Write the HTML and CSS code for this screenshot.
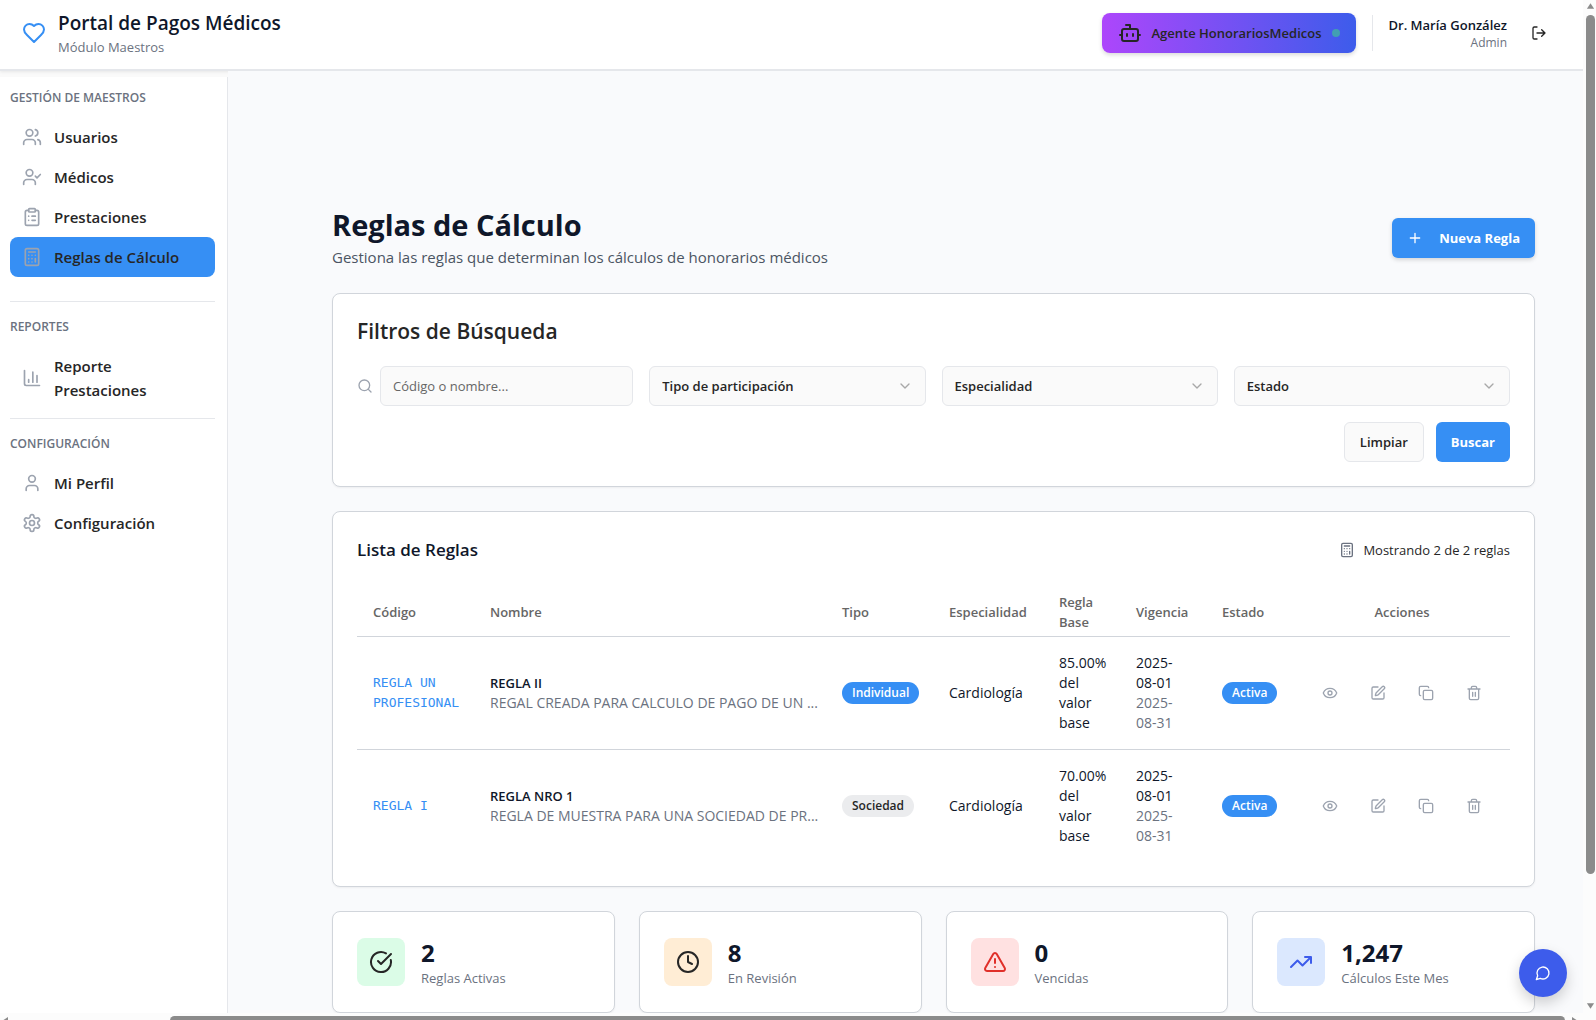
FILE: index.html
```html
<!DOCTYPE html>
<html lang="es">
<head>
<meta charset="utf-8">
<title>Portal de Pagos Médicos</title>
<meta name="viewport" content="width=device-width, initial-scale=1">
<link rel="stylesheet" href="styles.css">
</head>
<body>
<svg class="sprite" aria-hidden="true">
  <symbol id="i-heart" viewBox="0 0 24 24"><path d="M19 14c1.49-1.46 3-3.21 3-5.5A5.5 5.5 0 0 0 16.500 3c-1.760 0-3 .5-4.500 2-1.500-1.500-2.740-2-4.500-2A5.500 5.500 0 0 0 2 8.500c0 2.300 1.500 4.050 3 5.500l7 7Z"/></symbol>
  <symbol id="i-bot" viewBox="0 0 24 24"><path d="M12 8V4H8"/><rect width="16" height="12" x="4" y="8" rx="2"/><path d="M2 14h2M20 14h2M15 13v2M9 13v2"/></symbol>
  <symbol id="i-logout" viewBox="0 0 24 24"><path d="m16 17 5-5-5-5M21 12H9M9 21H5a2 2 0 0 1-2-2V5a2 2 0 0 1 2-2h4"/></symbol>
  <symbol id="i-users" viewBox="0 0 24 24"><path d="M16 21v-2a4 4 0 0 0-4-4H6a4 4 0 0 0-4 4v2"/><circle cx="9" cy="7" r="4"/><path d="M22 21v-2a4 4 0 0 0-3-3.870M16 3.130a4 4 0 0 1 0 7.750"/></symbol>
  <symbol id="i-user-check" viewBox="0 0 24 24"><path d="m16 11 2 2 4-4M16 21v-2a4 4 0 0 0-4-4H6a4 4 0 0 0-4 4v2"/><circle cx="9" cy="7" r="4"/></symbol>
  <symbol id="i-clipboard" viewBox="0 0 24 24"><rect width="8" height="4" x="8" y="2" rx="1"/><path d="M16 4h2a2 2 0 0 1 2 2v14a2 2 0 0 1-2 2H6a2 2 0 0 1-2-2V6a2 2 0 0 1 2-2h2M12 11h4M12 16h4M8 11h.010M8 16h.010"/></symbol>
  <symbol id="i-calculator" viewBox="0 0 24 24"><rect width="16" height="20" x="4" y="2" rx="2"/><path d="M8 6h8M16 14v4M16 10h.010M12 10h.010M8 10h.010M12 14h.010M8 14h.010M12 18h.010M8 18h.010"/></symbol>
  <symbol id="i-chart" viewBox="0 0 24 24"><path d="M3 3v16a2 2 0 0 0 2 2h16M18 17V9M13 17V5M8 17v-3"/></symbol>
  <symbol id="i-user" viewBox="0 0 24 24"><path d="M19 21v-2a4 4 0 0 0-4-4H9a4 4 0 0 0-4 4v2"/><circle cx="12" cy="7" r="4"/></symbol>
  <symbol id="i-settings" viewBox="0 0 24 24"><path d="M12.220 2h-.440a2 2 0 0 0-2 2v.180a2 2 0 0 1-1 1.730l-.430.250a2 2 0 0 1-2 0l-.150-.080a2 2 0 0 0-2.730.730l-.220.380a2 2 0 0 0 .730 2.730l.150.100a2 2 0 0 1 1 1.720v.510a2 2 0 0 1-1 1.740l-.150.090a2 2 0 0 0-.730 2.730l.220.380a2 2 0 0 0 2.730.730l.150-.080a2 2 0 0 1 2 0l.430.250a2 2 0 0 1 1 1.730V20a2 2 0 0 0 2 2h.440a2 2 0 0 0 2-2v-.180a2 2 0 0 1 1-1.730l.430-.250a2 2 0 0 1 2 0l.150.080a2 2 0 0 0 2.730-.730l.220-.390a2 2 0 0 0-.730-2.730l-.150-.080a2 2 0 0 1-1-1.740v-.500a2 2 0 0 1 1-1.740l.150-.090a2 2 0 0 0 .730-2.730l-.220-.380a2 2 0 0 0-2.730-.730l-.150.080a2 2 0 0 1-2 0l-.430-.250a2 2 0 0 1-1-1.730V4a2 2 0 0 0-2-2z"/><circle cx="12" cy="12" r="3"/></symbol>
  <symbol id="i-plus" viewBox="0 0 24 24"><path d="M5 12h14M12 5v14"/></symbol>
  <symbol id="i-search" viewBox="0 0 24 24"><circle cx="11" cy="11" r="8"/><path d="m21 21-4.300-4.300"/></symbol>
  <symbol id="i-chevron" viewBox="0 0 24 24"><path d="m6 9 6 6 6-6"/></symbol>
  <symbol id="i-eye" viewBox="0 0 24 24"><path d="M2.062 12.348a1 1 0 0 1 0-.696 10.750 10.750 0 0 1 19.876 0 1 1 0 0 1 0 .696 10.750 10.750 0 0 1-19.876 0"/><circle cx="12" cy="12" r="3"/></symbol>
  <symbol id="i-edit" viewBox="0 0 24 24"><path d="M12 3H5a2 2 0 0 0-2 2v14a2 2 0 0 0 2 2h14a2 2 0 0 0 2-2v-7"/><path d="M18.375 2.625a1 1 0 0 1 3 3l-9.013 9.014a2 2 0 0 1-.853.505l-2.873.840a.5.5 0 0 1-.620-.620l.840-2.873a2 2 0 0 1 .506-.852z"/></symbol>
  <symbol id="i-copy" viewBox="0 0 24 24"><rect width="14" height="14" x="8" y="8" rx="2"/><path d="M4 16c-1.100 0-2-.900-2-2V4c0-1.100.900-2 2-2h10c1.100 0 2 .900 2 2"/></symbol>
  <symbol id="i-trash" viewBox="0 0 24 24"><path d="M3 6h18M19 6v14c0 1-1 2-2 2H7c-1 0-2-1-2-2V6M8 6V4c0-1 1-2 2-2h4c1 0 2 1 2 2v2M10 11v6M14 11v6"/></symbol>
  <symbol id="i-check" viewBox="0 0 24 24"><path d="M21.801 10A10 10 0 1 1 17 3.335"/><path d="m9 11 3 3L22 4"/></symbol>
  <symbol id="i-clock" viewBox="0 0 24 24"><circle cx="12" cy="12" r="10"/><path d="M12 6v6l4 2"/></symbol>
  <symbol id="i-alert" viewBox="0 0 24 24"><path d="m21.730 18-8-14a2 2 0 0 0-3.480 0l-8 14A2 2 0 0 0 4 21h16a2 2 0 0 0 1.730-3M12 9v4M12 17h.010"/></symbol>
  <symbol id="i-trend" viewBox="0 0 24 24"><path d="M16 7h6v6M22 7l-8.500 8.500-5-5L2 17"/></symbol>
  <symbol id="i-chat" viewBox="0 0 24 24"><path d="M7.900 20A9 9 0 1 0 4 16.100L2 22Z"/></symbol>
</svg>

<div class="window">
  <div class="viewport">
    <header class="topbar">
      <svg class="icon icon-lg brand-icon"><use href="#i-heart"/></svg>
      <div class="brand">
        <p class="brand-name">Portal de Pagos Médicos</p>
        <p class="brand-module">Módulo Maestros</p>
      </div>
      <button type="button" class="agent">
        <svg class="icon icon-lg"><use href="#i-bot"/></svg>
        <span>Agente HonorariosMedicos</span>
        <span class="agent-dot"></span>
      </button>
      <div class="account">
        <p class="account-name">Dr. María González</p>
        <p class="account-role">Admin</p>
      </div>
      <button type="button" class="logout" aria-label="Cerrar sesión"><svg class="icon"><use href="#i-logout"/></svg></button>
    </header>

    <div class="shell">
      <nav class="sidebar">
        <section class="nav-group">
          <h2 class="nav-title">GESTIÓN DE MAESTROS</h2>
          <a class="nav-item" href="#usuarios"><svg class="icon icon-md"><use href="#i-users"/></svg>Usuarios</a>
          <a class="nav-item" href="#medicos"><svg class="icon icon-md"><use href="#i-user-check"/></svg>Médicos</a>
          <a class="nav-item" href="#prestaciones"><svg class="icon icon-md"><use href="#i-clipboard"/></svg>Prestaciones</a>
          <a class="nav-item nav-item-active" href="#reglas" aria-current="page"><svg class="icon icon-md"><use href="#i-calculator"/></svg>Reglas de Cálculo</a>
        </section>
        <section class="nav-group nav-group-main-end">
          <h2 class="nav-title">REPORTES</h2>
          <a class="nav-item" href="#reporte"><svg class="icon icon-md"><use href="#i-chart"/></svg><span>Reporte Prestaciones</span></a>
        </section>
        <section class="nav-group">
          <h2 class="nav-title">CONFIGURACIÓN</h2>
          <a class="nav-item" href="#perfil"><svg class="icon icon-md"><use href="#i-user"/></svg>Mi Perfil</a>
          <a class="nav-item" href="#configuracion"><svg class="icon icon-md"><use href="#i-settings"/></svg>Configuración</a>
        </section>
      </nav>

      <main class="content">
        <div class="page-head">
          <div>
            <h1>Reglas de Cálculo</h1>
            <p class="page-sub">Gestiona las reglas que determinan los cálculos de honorarios médicos</p>
          </div>
          <button type="button" class="btn btn-primary btn-new"><svg class="icon"><use href="#i-plus"/></svg>Nueva Regla</button>
        </div>

        <form class="card filters">
          <h2 class="filters-title">Filtros de Búsqueda</h2>
          <div class="filter-row">
            <div class="search">
              <label for="q" aria-label="Buscar por código o nombre"><svg class="icon"><use href="#i-search"/></svg></label>
              <input id="q" class="field" type="text" placeholder="Código o nombre...">
            </div>
            <div class="select">
              <select class="field" aria-label="Tipo de participación"><option>Tipo de participación</option></select>
              <svg class="icon select-icon"><use href="#i-chevron"/></svg>
            </div>
            <div class="select">
              <select class="field" aria-label="Especialidad"><option>Especialidad</option></select>
              <svg class="icon select-icon"><use href="#i-chevron"/></svg>
            </div>
            <div class="select">
              <select class="field" aria-label="Estado"><option>Estado</option></select>
              <svg class="icon select-icon"><use href="#i-chevron"/></svg>
            </div>
          </div>
          <div class="filter-actions">
            <button type="reset" class="btn btn-outline">Limpiar</button>
            <button type="button" class="btn btn-primary">Buscar</button>
          </div>
        </form>

        <section class="card">
          <div class="list-head">
            <h2 class="list-title">Lista de Reglas</h2>
            <p class="list-count"><svg class="icon"><use href="#i-calculator"/></svg>Mostrando 2 de 2 reglas</p>
          </div>
          <table class="rules">
            <colgroup><col class="c-code"><col><col class="c-type"><col class="c-spec"><col class="c-base"><col class="c-date"><col class="c-state"><col class="c-actions"></colgroup>
            <thead>
              <tr><th>Código</th><th>Nombre</th><th>Tipo</th><th>Especialidad</th><th>Regla Base</th><th>Vigencia</th><th>Estado</th><th class="th-actions">Acciones</th></tr>
            </thead>
            <tbody>
              <tr>
                <td class="code">REGLA UN PROFESIONAL</td>
                <td><p class="rule-name">REGLA II</p><p class="rule-desc">REGAL CREADA PARA CALCULO DE PAGO DE UN ...</p></td>
                <td><span class="badge">Individual</span></td>
                <td>Cardiología</td>
                <td>85.00% del valor base</td>
                <td><p>2025-08-01</p><p class="muted">2025-08-31</p></td>
                <td><span class="badge">Activa</span></td>
                <td><div class="actions">
                  <button type="button" aria-label="Ver"><svg class="icon"><use href="#i-eye"/></svg></button>
                  <button type="button" aria-label="Editar"><svg class="icon"><use href="#i-edit"/></svg></button>
                  <button type="button" aria-label="Duplicar"><svg class="icon"><use href="#i-copy"/></svg></button>
                  <button type="button" aria-label="Eliminar"><svg class="icon"><use href="#i-trash"/></svg></button>
                </div></td>
              </tr>
              <tr>
                <td class="code">REGLA I</td>
                <td><p class="rule-name">REGLA NRO 1</p><p class="rule-desc">REGLA DE MUESTRA PARA UNA SOCIEDAD DE PR...</p></td>
                <td><span class="badge badge-soft">Sociedad</span></td>
                <td>Cardiología</td>
                <td>70.00% del valor base</td>
                <td><p>2025-08-01</p><p class="muted">2025-08-31</p></td>
                <td><span class="badge">Activa</span></td>
                <td><div class="actions">
                  <button type="button" aria-label="Ver"><svg class="icon"><use href="#i-eye"/></svg></button>
                  <button type="button" aria-label="Editar"><svg class="icon"><use href="#i-edit"/></svg></button>
                  <button type="button" aria-label="Duplicar"><svg class="icon"><use href="#i-copy"/></svg></button>
                  <button type="button" aria-label="Eliminar"><svg class="icon"><use href="#i-trash"/></svg></button>
                </div></td>
              </tr>
            </tbody>
          </table>
        </section>

        <section class="stats">
          <div class="card stat">
            <span class="stat-icon stat-green"><svg class="icon icon-lg"><use href="#i-check"/></svg></span>
            <div><p class="stat-value">2</p><p class="stat-label">Reglas Activas</p></div>
          </div>
          <div class="card stat">
            <span class="stat-icon stat-orange"><svg class="icon icon-lg"><use href="#i-clock"/></svg></span>
            <div><p class="stat-value">8</p><p class="stat-label">En Revisión</p></div>
          </div>
          <div class="card stat">
            <span class="stat-icon stat-red"><svg class="icon icon-lg"><use href="#i-alert"/></svg></span>
            <div><p class="stat-value">0</p><p class="stat-label">Vencidas</p></div>
          </div>
          <div class="card stat">
            <span class="stat-icon stat-blue"><svg class="icon icon-lg"><use href="#i-trend"/></svg></span>
            <div><p class="stat-value">1,247</p><p class="stat-label">Cálculos Este Mes</p></div>
          </div>
        </section>
      </main>
    </div>
    <button type="button" class="chat" aria-label="Abrir chat"><svg class="icon"><use href="#i-chat"/></svg></button>
  </div>

  <div class="scroll-y" aria-hidden="true">
    <svg class="arrow" viewBox="0 0 10 8"><path d="M5 1 9 7H1Z"/></svg>
    <div class="track-y"><div class="thumb-y"></div></div>
    <svg class="arrow" viewBox="0 0 10 8"><path d="M5 7 9 1H1Z"/></svg>
  </div>
  <div class="scroll-x" aria-hidden="true">
    <svg class="arrow" viewBox="0 0 8 10"><path d="M1 5 7 1V9Z"/></svg>
    <div class="track-x"><div class="thumb-x"></div></div>
    <svg class="arrow" viewBox="0 0 8 10"><path d="M7 5 1 1V9Z"/></svg>
  </div>
</div>
</body>
</html>
```

FILE: styles.css
```css
*, *::before, *::after { box-sizing: border-box; }

:root {
  --blue: #368ff4;
  --indigo: #3d5ceb;
  --ink: #0f172a;
  --text: #262626;
  --gray: #6b7280;
  --gray-light: #9ca3af;
  --line: #e5e7eb;
  --card-line: #d1d5db;
  --thumb: #8b8b8b;
}

body {
  margin: 0;
  font-family: "Open Sans", "Noto Sans", sans-serif;
  font-size: 13px;
  line-height: 20px;
  color: var(--text);
  background: #fafafa;
}

h1, h2, p { margin: 0; }
button, input, select { font: inherit; color: inherit; }
button { border: 0; background: none; padding: 0; cursor: pointer; }
a { color: inherit; text-decoration: none; }

.sprite { display: none; }

.icon {
  width: 16px;
  height: 16px;
  flex: none;
  display: block;
  fill: none;
  stroke: currentColor;
  stroke-width: 2;
  stroke-linecap: round;
  stroke-linejoin: round;
}
.icon-md { width: 20px; height: 20px; }
.icon-lg { width: 24px; height: 24px; }

/* Window frame with its scroll bars */
.window {
  height: 100vh;
  display: grid;
  grid-template: minmax(0, 1fr) 7px / minmax(0, 1fr) 13px;
}
.viewport {
  position: relative;
  overflow: hidden;
  display: flex;
  flex-direction: column;
}

/* Top bar */
.topbar {
  flex: none;
  display: flex;
  align-items: center;
  padding: 9px 28px 12px 22px;
  background: #fff;
  border-bottom: 2px solid var(--line);
  box-shadow: 0 1px 3px rgba(0, 0, 0, 0.08);
}
.brand-icon { color: var(--blue); }
.brand { margin: 0 auto 0 12px; }
.brand-name { font-size: 19px; line-height: 29px; font-weight: 600; color: var(--ink); }
.brand-module { line-height: 19px; color: var(--gray); }
.agent {
  display: flex;
  align-items: center;
  gap: 10px;
  height: 40px;
  padding: 0 16px;
  border-radius: 8px;
  font-weight: 600;
  background: linear-gradient(to right, #ad46fb, var(--indigo));
  box-shadow: 0 2px 4px rgba(0, 0, 0, 0.15);
}
.agent-dot { width: 8px; height: 8px; border-radius: 50%; background: #429fb2; }
.account {
  margin-left: 16px;
  padding-left: 16px;
  border-left: 1px solid var(--line);
  text-align: right;
}
.account-name { font-weight: 600; color: var(--ink); }
.account-role { font-size: 12px; line-height: 16px; color: var(--gray); }
.logout {
  width: 32px;
  height: 32px;
  margin-left: 16px;
  display: grid;
  place-items: center;
}

/* Shell */
.shell { flex: 1; min-height: 0; display: flex; }
.sidebar {
  flex: none;
  width: 228px;
  margin-top: 6px;
  padding: 4px 12px 4px 10px;
  background: #fff;
  border-right: 1px solid var(--line);
}
.nav-group + .nav-group {
  border-top: 1px solid var(--line);
  margin-top: 24px;
  padding-top: 8px;
}
.nav-group-main-end + .nav-group { margin-top: 8px; }
.nav-title {
  margin-bottom: 2px;
  font-size: 12px;
  line-height: 34px;
  font-weight: 600;
  color: var(--gray);
}
.nav-item {
  display: flex;
  align-items: center;
  gap: 12px;
  padding: 8px 12px;
  border-radius: 8px;
  font-size: 15px;
  line-height: 24px;
  font-weight: 600;
}
.nav-item .icon { color: var(--gray-light); }
.nav-item-active { background: var(--blue); }

/* Page */
.content {
  flex: 1;
  min-width: 0;
  display: flex;
  flex-direction: column;
  gap: 24px;
  padding: 136px 48px 0 104px;
  background: #f9fafc;
}
.page-head { display: flex; align-items: center; justify-content: space-between; }
h1 { font-size: 29px; line-height: 36px; font-weight: 700; color: var(--ink); margin-bottom: 2px; }
.page-sub { font-size: 15px; line-height: 24px; color: #4b5563; }

.btn {
  height: 40px;
  padding: 0 15px;
  border-radius: 6px;
  font-weight: 600;
}
.btn-primary { background: var(--blue); color: #fff; font-weight: 700; }
.btn-outline { background: #fafafa; border: 1px solid var(--line); }
.btn-new {
  display: flex;
  align-items: center;
  gap: 16px;
  box-shadow: 0 2px 4px rgba(0, 0, 0, 0.15);
}

.card {
  flex: none;
  padding: 24px;
  background: #fff;
  border: 1px solid var(--card-line);
  border-radius: 8px;
  box-shadow: 0 1px 2px rgba(0, 0, 0, 0.05);
}

/* Filters */
.filters-title { font-size: 21px; line-height: 26px; font-weight: 600; margin-bottom: 22px; }
.filter-row { display: grid; grid-template-columns: repeat(4, minmax(0, 1fr)); gap: 16px; }
.search { display: flex; align-items: center; gap: 7px; color: var(--gray-light); }
.field {
  width: 100%;
  height: 40px;
  padding: 0 12px;
  border: 1px solid var(--line);
  border-radius: 6px;
  background: #fafafa;
  color: var(--text);
}
.field::placeholder { color: #666; opacity: 1; }
.select { position: relative; }
.select .field { appearance: none; font-weight: 600; }
.select-icon {
  position: absolute;
  right: 13px;
  top: 12px;
  color: #a8a8a8;
  pointer-events: none;
}
.filter-actions { display: flex; justify-content: flex-end; gap: 12px; margin-top: 16px; }

/* Rules list */
.list-head { display: flex; align-items: center; justify-content: space-between; margin-bottom: 24px; }
.list-title { font-size: 17px; line-height: 28px; font-weight: 600; color: var(--ink); }
.list-count { display: flex; align-items: center; gap: 8px; }
.list-count .icon { color: var(--gray); }

.rules { width: 100%; table-layout: fixed; border-collapse: separate; border-spacing: 0; }
.c-code { width: 117px; }
.c-type { width: 107px; }
.c-spec { width: 110px; }
.c-base { width: 77px; }
.c-date { width: 86px; }
.c-state { width: 88px; }
.c-actions { width: 216px; }
.rules th {
  padding: 4px 16px;
  text-align: left;
  font-weight: 600;
  color: #666;
  border-bottom: 1px solid var(--card-line);
}
.rules .th-actions { text-align: center; }
.rules td { padding: 16px; font-size: 14px; color: var(--ink); border-bottom: 1px solid var(--card-line); }
.rules tbody tr:last-child td { border-bottom: 0; }
.rules .code { font-family: "DejaVu Sans Mono", "Liberation Mono", monospace; font-size: 13px; color: var(--blue); }
.rule-name { font-size: 13px; font-weight: 600; }
.rule-desc { color: var(--gray); white-space: nowrap; }
.muted { color: var(--gray); }
.badge {
  display: inline-block;
  padding: 3px 10px;
  border-radius: 11px;
  font-size: 12px;
  line-height: 16px;
  font-weight: 600;
  color: #fff;
  background: var(--blue);
}
.badge-soft { color: var(--text); background: #ebecee; }
.actions { display: flex; gap: 8px; color: var(--gray-light); }
.actions button { width: 40px; height: 40px; display: grid; place-items: center; }

/* Stats */
.stats { display: grid; grid-template-columns: repeat(4, minmax(0, 1fr)); gap: 24px; }
.stat { display: flex; align-items: center; gap: 16px; }
.stat-icon {
  width: 48px;
  height: 48px;
  display: grid;
  place-items: center;
  border-radius: 8px;
}
.stat-green { background: #dbfce7; }
.stat-orange { background: #ffedd5; }
.stat-red { background: #ffe1e1; color: #e0302a; }
.stat-blue { background: #dbe8fe; color: var(--indigo); }
.stat-value { font-size: 24px; line-height: 33px; font-weight: 700; color: var(--ink); }
.stat-label { line-height: 19px; color: var(--gray); }

.chat {
  position: absolute;
  right: 16px;
  bottom: 16px;
  width: 48px;
  height: 48px;
  display: grid;
  place-items: center;
  border-radius: 50%;
  color: #fff;
  background: var(--indigo);
  box-shadow: 0 6px 14px rgba(0, 0, 0, 0.18);
}

/* Scroll bars */
.scroll-y, .scroll-x { display: flex; align-items: center; background: #fcfcfc; }
.scroll-y { flex-direction: column; padding: 2px 1px 3px 3px; }
.scroll-x { grid-column: 1 / -1; align-items: flex-start; padding: 3px 17px 0 1px; overflow: hidden; }
.arrow { flex: none; width: 9px; height: 8px; fill: var(--thumb); }
.scroll-x .arrow { width: 8px; height: 10px; }
.track-y { flex: 1; width: 9px; margin: 5px 0; }
.thumb-y { height: 87.5%; border-radius: 5px; background: var(--thumb); }
.track-x { flex: 1; display: flex; justify-content: flex-end; margin: 0 6px; }
.thumb-x { width: 90%; height: 9px; border-radius: 5px; background: var(--thumb); }
```
